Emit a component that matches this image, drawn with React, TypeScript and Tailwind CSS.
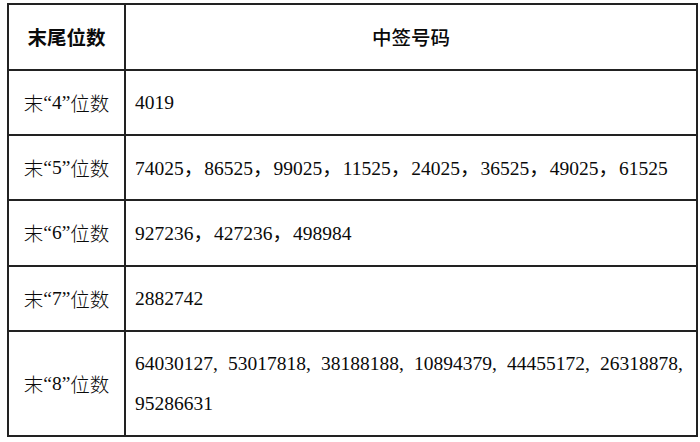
import React from 'react';

const serif = "font-['Liberation_Serif','Noto_Sans_CJK_SC',serif]";

interface Row {
  digits: string;
  lines: string[][];
  wide: boolean;
  height: string;
}

const rows: Row[] = [
  { digits: '4', lines: [['4019']], wide: true, height: 'h-[65px]' },
  {
    digits: '5',
    lines: [['74025', '86525', '99025', '11525', '24025', '36525', '49025', '61525']],
    wide: true,
    height: 'h-[65px]'
  },
  { digits: '6', lines: [['927236', '427236', '498984']], wide: true, height: 'h-[66px]' },
  { digits: '7', lines: [['2882742']], wide: true, height: 'h-[65px]' },
  {
    digits: '8',
    lines: [
      ['64030127', '53017818', '38188188', '10894379', '44455172', '26318878', ''],
      ['95286631']
    ],
    wide: false,
    height: 'h-[103px]'
  }
];

const Comma: React.FC<{ wide: boolean }> = ({ wide }) =>
  wide ? (
    <span className="inline-block w-[20.5px] font-['Noto_Sans_CJK_SC',sans-serif]">，</span>
  ) : (
    <span className="inline-block w-[15px]">,</span>
  );

export default function App() {
  return (
    <div className="w-[700px] h-[442px] bg-white pt-[3px] pl-[7px] text-[#0a0a0a]">
      <div className="w-[691px] border-2 border-[#222]">
        <div className="grid grid-cols-[117px_1fr] h-[66px] border-b-2 border-[#222]">
          <div className="flex items-center justify-center border-r-2 border-[#222] font-['Noto_Sans_CJK_SC',sans-serif] font-bold text-[19.5px]">
            末尾位数
          </div>
          <div className="flex items-center justify-center font-['Noto_Sans_CJK_SC',sans-serif] font-medium text-[19.5px]">
            中签号码
          </div>
        </div>
        {rows.map((row, i) => (
          <div
            key={row.digits}
            className={`grid grid-cols-[117px_1fr] ${row.height} ${
              i < rows.length - 1 ? 'border-b-2 border-[#222]' : ''
            }`}
          >
            <div className={`flex items-center justify-center border-r-2 border-[#222] text-[19.5px] ${serif}`}>
              <span className="font-['Noto_Sans_CJK_SC',sans-serif] font-light">末</span>
              <span>“{row.digits}”</span>
              <span className="font-['Noto_Sans_CJK_SC',sans-serif] font-light">位数</span>
            </div>
            <div className={`flex flex-col justify-center pl-[9px] text-[19.5px] leading-[40px] ${serif}`}>
              {row.lines.map((line, li) => (
                <div key={li} className="whitespace-nowrap">
                  {line.map((num, ni) => (
                    <React.Fragment key={ni}>
                      {num === '' ? null : num}
                      {(ni < line.length - 1 && line[ni + 1] !== '') || (num !== '' && line[ni + 1] === '') ? (
                        <Comma wide={row.wide} />
                      ) : null}
                    </React.Fragment>
                  ))}
                </div>
              ))}
            </div>
          </div>
        ))}
      </div>
    </div>
  );
}
